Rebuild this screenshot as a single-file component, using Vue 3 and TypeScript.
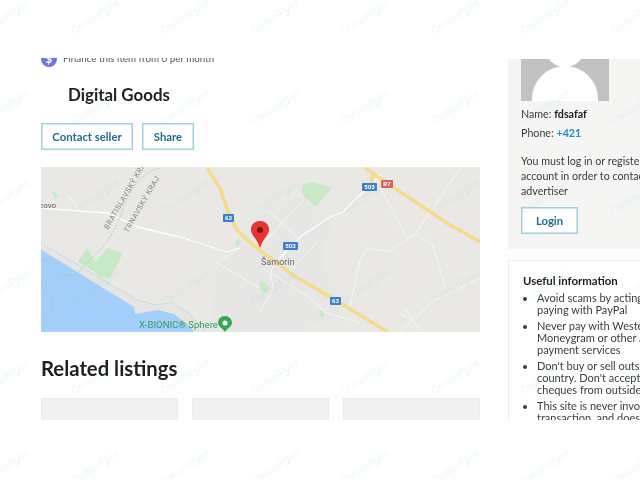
<template>
  <div class="clip">
    <div class="page">
      <main class="main">
        <div class="finance">
          <span class="finance-icon">$</span>
          <span>Finance this item from 0 per month</span>
        </div>
        <h2 class="category">Digital Goods</h2>
        <div class="actions">
          <button class="btn">Contact seller</button>
          <button class="btn">Share</button>
        </div>

        <!-- Static map -->
        <svg class="map" viewBox="0 0 439 165" width="439" height="165">
          <rect width="439" height="165" fill="#e9e8e4" />
          <path d="M176 96L199 70 226 40 262 30 290 60 280 90 300 150 250 165H170Z" fill="#e6e6e5" />
          <path d="M-1 76L96 133 113 138 131 136 147 146 165 165H-1Z" fill="#a4cffb" stroke="#b7d6f7" stroke-width="1.2" />
          <path d="M-1 82L93 140 94 147 106 145 117 143 133 147 146 157 154 165H165L147 146 131 136 113 138 96 133-1 76Z" fill="#e6e5e1" />
          <g fill="#c8e9c6">
            <path d="M46 81L37 95 54 105 59 110 69 111 82 86 67 81 54 95Z" />
            <path d="M261 18L272 15 291 21 274 40 261 27Z" />
            <path d="M219 113L229 121 224 126 219 123Z" />
            <path d="M11 25L14 24 17 31 14 32ZM279 144l4-1 0 7-4 0ZM196 73l3-1-1 6-3 1Z" />
          </g>
          <g fill="none" stroke="#f7f7f5" stroke-width=".9" stroke-linejoin="round">
            <path d="M-1 41L67 46 96 60 139 70 186 85 199 81" stroke-width="1.3" stroke="#fff" />
            <path d="M27 28L38 43" />
            <path d="M239 91L259 70 289 50 302 45 321 26 340 8" stroke-width="1.3" stroke="#fff" />
            <path d="M262 33L241 56 224 75M226 43L256 70M276 75L252 101M176 96L199 81M176 96L219 121" />
            <path d="M229 105L269 131 284 145 319 156M229 105L232 121 219 145M239 91L229 105" />
            <path d="M339 20L366 71M419 1L392 41 374 67" />
            <path d="M309 140L319 93 326 81 347 85 374 67 392 78 404 121" />
            <path d="M359 165L391 135 439 111M364 141L379 163M359 146L371 153" />
          </g>
          <path d="M166 1L179 21 187 45 196 63 212 78 252 108 289 130 319 148 347 165" fill="none" stroke="#efd07c" stroke-width="3" />
          <path d="M166 1L179 21 187 45 196 63 212 78 252 108 289 130 319 148 347 165" fill="none" stroke="#fcdf7c" stroke-width="1.8" />
          <path d="M324 1L352 20 379 38 406 56 439 75M331 8V17" fill="none" stroke="#efd07c" stroke-width="3" />
          <path d="M324 1L352 20 379 38 406 56 439 75M331 8V17" fill="none" stroke="#fcdf7c" stroke-width="1.8" />
          <path d="M118 1Q92 10 82 42T46 95L35 108 20 108 8 95 0 92M0 120L12 128 10 145 0 158" fill="none" stroke="#b8b8b4" stroke-width=".8" stroke-dasharray="2 1.5" />
          <g font-family="Roboto, sans-serif">
            <text x="-2" y="41" font-size="8" fill="#5c5c5c">covo</text>
            <text transform="translate(67 63) rotate(-60)" font-size="7.5" font-weight="500" letter-spacing=".4" fill="#989896">BRATISLAVSKÝ KRAJ</text>
            <text transform="translate(87 66) rotate(-60)" font-size="7.5" font-weight="500" letter-spacing=".4" fill="#989896">TRNAVSKÝ KRAJ</text>
            <text x="220" y="98" font-size="9" fill="#6c6c6c">Šamorín</text>
            <text x="98" y="161" font-size="9.600" fill="#2f9e62">X-BIONIC® Sphere</text>
          </g>
          <g font-family="Roboto, sans-serif" font-size="6" font-weight="700" text-anchor="middle" fill="#fff">
            <rect x="182" y="47" width="11" height="8" rx="1" fill="#3b7fd0" /><text x="187.5" y="53.3">63</text>
            <rect x="289" y="130" width="11" height="8" rx="1" fill="#3b7fd0" /><text x="294.5" y="136.3">63</text>
            <rect x="242" y="75" width="15" height="8" rx="1" fill="#3b7fd0" /><text x="249.500" y="81.3">503</text>
            <rect x="321" y="16" width="15" height="8" rx="1" fill="#3b7fd0" /><text x="328.500" y="22.3">503</text>
            <rect x="340" y="13" width="12" height="8" rx="1" fill="#d9605e" /><text x="346" y="19.3">R7</text>
          </g>
          <path d="M184 149c-4 0-7 3-7 7 0 4 5 5 7 9 2-4 7-5 7-9 0-4-3-7-7-7z" fill="#34a853" />
          <circle cx="184" cy="156" r="2.500" fill="#fff" />
          <path d="M219 54c-5.500 0-9 4-9 8.500 0 6 6.500 9 9 19 2.500-10 9-13 9-19 0-4.500-3.500-8.500-9-8.500z" fill="#e8342c" />
          <circle cx="219" cy="63" r="3" fill="#7c1410" />
        </svg>

        <h2 class="related-title">Related listings</h2>
        <div class="related">
          <div v-for="n in 3" :key="n" class="related-card"></div>
        </div>
      </main>

      <aside class="aside">
        <div class="seller">
          <svg class="avatar" viewBox="0 0 88 42" width="88" height="42">
            <rect width="88" height="42" fill="#c2c2c2" />
            <circle cx="44" cy="-12" r="20" fill="#fff" />
            <circle cx="44" cy="40" r="33" fill="#fff" />
            <rect x="11" y="40" width="66" height="2" fill="#fff" />
          </svg>
          <p class="seller-line">Name: <strong>fdsafaf</strong></p>
          <p class="seller-line">Phone: <a class="phone">+421</a></p>
          <p class="login-note">You must log in or register a new account in order to contact the advertiser</p>
          <button class="btn btn-login">Login</button>
        </div>

        <div class="info">
          <h3>Useful information</h3>
          <ul>
            <li v-for="tip in tips" :key="tip">{{ tip }}</li>
          </ul>
        </div>
      </aside>
    </div>
  </div>

  <!-- Demo watermark over the whole page -->
  <div class="watermarks">
    <span v-for="n in 63" :key="n" class="mark"><span class="mark-text">OsclassPoint</span></span>
  </div>
</template>

<script setup lang="ts">
const tips: string[] = [
  'Avoid scams by acting locally or paying with PayPal',
  'Never pay with Western Union, Moneygram or other anonymous payment services',
  "Don't buy or sell outside of your country. Don't accept cashier cheques from outside your country",
  'This site is never involved in any transaction, and does not handle payments'
]
</script>

<style>
html,
body {
  margin: 0;
  height: 100%;
  overflow: hidden;
  background: #fff;
}
</style>

<style scoped>
.clip {
  margin-top: 58px;
  height: 362px;
  overflow: hidden;
  font-family: Lato, "Open Sans", sans-serif;
  color: #3c3c3c;
  filter: blur(.3px);
}

.page {
  display: flex;
  gap: 28px;
  margin-top: -7px;
  padding-left: 41px;
}

.main {
  flex: 0 0 439px;
  width: 439px;
}

.finance {
  display: flex;
  align-items: flex-start;
  gap: 6px;
  height: 16px;
  font-size: 9.8px;
  line-height: 14px;
  color: #555;
}

.finance-icon {
  flex: none;
  width: 16px;
  height: 16px;
  border-radius: 50%;
  background: #7076dc;
  color: #fff;
  font-size: 11px;
  font-weight: 700;
  line-height: 16px;
  text-align: center;
}

.category {
  margin: 18px 0 0 27px;
  font-size: 16.9px;
  line-height: 20px;
  font-weight: 700;
  color: #1f1f1f;
}

.actions {
  display: flex;
  gap: 9px;
  margin-top: 18px;
}

.btn {
  height: 27px;
  padding: 0 11px;
  background: #fff;
  border: 1px solid #9fd1df;
  box-shadow: inset 0 0 0 .5px #9fd1df;
  border-radius: 0;
  font-family: inherit;
  font-size: 11.3px;
  font-weight: 700;
  color: #1f6d8c;
}

.actions .btn:first-child {
  width: 92px;
  padding: 0;
}

.actions .btn:last-child {
  width: 52px;
  padding: 0;
}

.btn-login {
  width: 57px;
  padding: 0;
}

.map {
  display: block;
  margin-top: 17px;
}

.related-title {
  margin: 24px 0 0;
  font-size: 20.3px;
  line-height: 24px;
  font-weight: 700;
  color: #1f1f1f;
}

.related {
  display: grid;
  grid-template-columns: repeat(3, 137px);
  gap: 14px;
  margin-top: 18px;
}

.related-card {
  height: 60px;
  background: #f1f1f1;
  border: 1px solid #ebebeb;
  box-sizing: border-box;
}

.aside {
  flex: 0 0 222px;
  width: 222px;
  padding-top: 8px;
}

.seller {
  height: 190px;
  box-sizing: border-box;
  padding: 0 23px 0 13px;
  background: #f5f5f3;
  font-size: 10.7px;
}

.avatar {
  display: block;
}

.seller-line {
  margin: 6px 0 0;
  line-height: 13px;
}

.seller-line + .seller-line {
  margin-top: 6px;
}

.seller-line strong {
  color: #1f1f1f;
}

.phone {
  color: #1d8fc4;
  font-weight: 700;
}

.login-note {
  margin: 14px 0 9px;
  line-height: 15px;
}

.info {
  margin-top: 11px;
  padding: 13px 14px 20px;
  border: 1px solid #ececec;
  background: #fff;
}

.info h3 {
  margin: 0 0 4px;
  font-size: 11.4px;
  line-height: 14px;
  font-weight: 700;
  color: #1f1f1f;
}

.info ul {
  margin: 0;
  padding: 0 0 0 14px;
}

.info li {
  margin-bottom: 4px;
  font-size: 11px;
  line-height: 12px;
}

.watermarks {
  position: fixed;
  top: -29px;
  left: -40px;
  display: grid;
  grid-template-columns: repeat(9, 90px);
  grid-auto-rows: 90px;
  pointer-events: none;
}

.mark {
  display: flex;
  align-items: center;
  justify-content: center;
  font-family: Lato, sans-serif;
  font-size: 10px;
  color: rgba(110, 215, 195, .13);
  transform: rotate(-33deg);
}

.mark-text {
  position: relative;
}

.mark-text::after {
  content: "";
  position: absolute;
  left: 37px;
  top: 9px;
  width: 5px;
  height: 2px;
  border-left: 1.5px solid rgba(110, 215, 195, .18);
  border-bottom: 1.5px solid rgba(110, 215, 195, .18);
  transform: rotate(-45deg);
}
</style>
